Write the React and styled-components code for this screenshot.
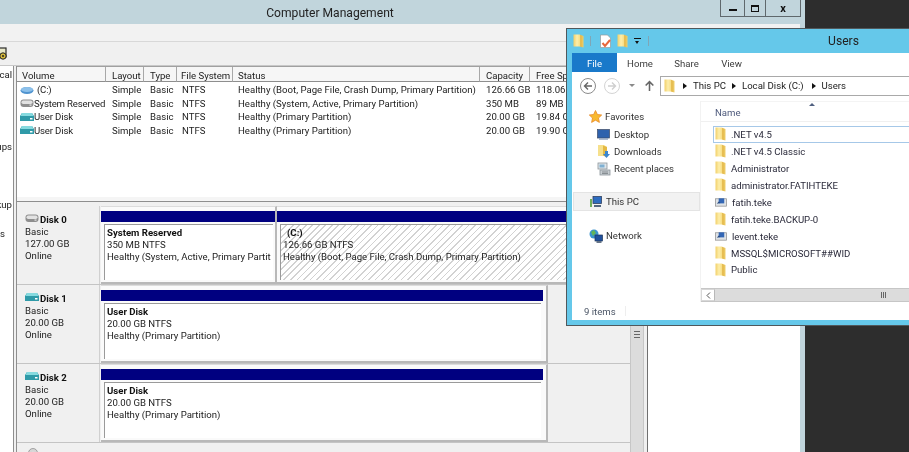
import React from "react";
import styled, { createGlobalStyle } from "styled-components";

const Global = createGlobalStyle`
  html, body { margin: 0; padding: 0; background: #2d2d2d; }
  * { box-sizing: border-box; }
  svg { flex: none; }
`;

const Desktop = styled.div`
  position: relative;
  width: 909px;
  height: 452px;
  overflow: hidden;
  background: #2d2d2d;
  font-family: Roboto, "Open Sans", sans-serif;
  font-size: 9.6px;
  color: #222;
  filter: blur(0.3px);
`;

/* ---------- Computer Management window ---------- */
const MgmtWindow = styled.div`
  width: 805px;
  height: 452px;
  display: flex;
  flex-direction: column;
  background: #c1d5dc;
  padding-right: 5px;
`;
const TitleBar = styled.div`
  height: 24px;
  flex: none;
  margin-right: -5px;
  padding: 1px 145px 0 0;
  display: flex;
  align-items: center;
  justify-content: center;
  background: #c1d5dc;
  font-size: 12.1px;
  color: #222;
`;
const WindowControls = styled.div`
  position: absolute;
  left: 720px;
  top: 0;
  width: 81px;
  height: 17px;
  display: grid;
  grid-template-columns: 23px 21px 1fr;
  background: #c1d5dc;
  border: 1px solid #5f686c;
  border-top: none;
`;
const ControlCell = styled.div`
  display: flex;
  align-items: center;
  justify-content: center;
  border-left: ${(p) => (p.$first ? "none" : "1px solid #5f686c")};
  font-weight: 700;
  font-size: 11px;
  color: #111;
`;
const MinGlyph = styled.span`
  width: 8px;
  height: 2px;
  margin-top: 4px;
  background: #111;
`;
const MaxGlyph = styled.span`
  width: 8px;
  height: 7px;
  border: 1px solid #111;
  border-top-width: 2px;
`;
const MenuBar = styled.div`
  height: 18px;
  flex: none;
  background: #f2f2f2;
  border-bottom: 1px solid #d8d8d8;
`;
const ToolBar = styled.div`
  height: 24px;
  flex: none;
  display: flex;
  align-items: center;
  background: #f0f0f0;
  border-bottom: 1px solid #c8c8c8;
`;
const Body = styled.div`
  flex: 1;
  min-height: 0;
  display: flex;
  background: #f0f0f0;
`;
const Tree = styled.div`
  width: 14px;
  flex: none;
  background: #fff;
  border-right: 1px solid #8e8e8e;
  overflow: hidden;
  padding-top: 3px;
  display: flex;
  flex-direction: column;
`;
const TreeLine = styled.div`
  display: flex;
  justify-content: ${(p) => (p.$left ? "flex-start" : "flex-end")};
  margin-top: ${(p) => p.$gap}px;
  line-height: 12px;
  white-space: nowrap;
  padding-right: 1px;
`;
const Center = styled.div`
  width: 614px;
  flex: none;
  margin-left: 2px;
  display: flex;
  flex-direction: column;
  border-left: 1px solid #8e8e8e;
`;
const VolumeList = styled.div`
  height: 135px;
  flex: none;
  background: #fff;
  overflow: hidden;
  border-top: 1px solid #a0a0a0;
  border-bottom: 4px solid #f5f5f5;
`;
const ListGrid = styled.div`
  display: grid;
  grid-template-columns: 89px 38px 33px 56px 247px 50px 80px;
`;
const HeadCell = styled.div`
  height: 15px;
  padding-left: ${(p) => p.$pad ?? 5}px;
  line-height: 17px;
  background: #f6f6f6;
  border-right: 1px solid #a8a8a8;
  border-bottom: 1px solid #8e8e8e;
  white-space: nowrap;
  overflow: hidden;
`;
const Cell = styled.div`
  height: 13.5px;
  padding-left: ${(p) => p.$pad ?? 6}px;
  line-height: 13.5px;
  white-space: nowrap;
  overflow: hidden;
  display: flex;
  align-items: center;
  gap: ${(p) => p.$gap ?? 0}px;
`;
const VolumeCell = styled(Cell)`
  padding-left: 3px;
  letter-spacing: -0.16px;
`;
const ListSpacer = styled.div`
  grid-column: 1 / -1;
  height: 1px;
`;
const Splitter = styled.div`
  height: 5px;
  flex: none;
  background: #f0f0f0;
  border-top: 1px solid #8e8e8e;
`;
const DiskPane = styled.div`
  flex: 1;
  min-height: 0;
  background: #f0f0f0;
  display: flex;
  flex-direction: column;
  overflow: hidden;
`;
const DiskRow = styled.div`
  height: 79px;
  flex: none;
  display: flex;
  border-bottom: 1px solid #c4c4c4;
`;
const DiskInfo = styled.div`
  width: 83px;
  flex: none;
  padding: 7px 0 0 8px;
  border-right: 1px solid #d0d0d0;
  line-height: 12px;
`;
const DiskName = styled.div`
  display: flex;
  align-items: center;
  gap: 1px;
  font-weight: 700;
  color: #111;
  height: 13px;
  & svg {
    margin-top: -4px;
  }
`;
const DiskMeta = styled.div`
  line-height: 12px;
`;
const Volumes = styled.div`
  flex: 1;
  display: flex;
  padding-left: 1px;
  min-width: 0;
`;
const Partition = styled.div`
  width: ${(p) => p.$w}px;
  flex: none;
  padding: 4px ${(p) => p.$pr}px 0 0;
  border-right: 2px solid #b8b8b8;
  border-bottom: 2px solid #b8b8b8;
  border-top: 1px solid #dcdcdc;
  display: flex;
  flex-direction: column;
  background: #fafafa;
`;
const NavyBar = styled.div`
  height: 11px;
  flex: none;
  background: #000080;
`;
const PartBox = styled.div`
  flex: 1;
  margin: 2px ${(p) => p.$mr}px 2px ${(p) => p.$ml}px;
  padding: 2px 0 0 2px;
  border-left: 1px solid #9a9a9a;
  border-top: 1px solid #9a9a9a;
  line-height: 12px;
  white-space: nowrap;
  overflow: hidden;
  background: ${(p) =>
    p.$hatched
      ? "repeating-linear-gradient(135deg, #fff 0 3.5px, #d2d2d2 3.5px 4.6px)"
      : "#fff"};
`;
const PartTitle = styled.div`
  font-weight: 700;
  color: #111;
  padding-left: ${(p) => p.$pad ?? 0}px;
`;
const LastRow = styled.div`
  flex: 1;
  padding: 5px 0 0 11px;
`;
const VScroll = styled.div`
  width: 14px;
  flex: none;
  background: #dcdcdc;
  border-left: 1px solid #c6c6c6;
  border-right: 1px solid #c6c6c6;
  display: flex;
  align-items: flex-start;
  justify-content: center;
  padding-top: 265px;
`;
const Grip = styled.div`
  width: 6px;
  height: 7px;
  border-top: 1px solid #666;
  border-bottom: 1px solid #666;
  position: relative;
  &::after {
    content: "";
    position: absolute;
    left: 0;
    right: 0;
    top: 2px;
    height: 1px;
    background: #666;
  }
`;
const ActionGap = styled.div`
  width: 3px;
  flex: none;
  background: #f0f0f0;
`;
const ActionPane = styled.div`
  flex: 1;
  background: #fff;
  border-left: 1px solid #707070;
`;

/* ---------- Users explorer window ---------- */
const ExplorerWindow = styled.div`
  position: absolute;
  left: 566px;
  top: 28px;
  width: 554px;
  height: 298px;
  display: flex;
  flex-direction: column;
  background: #65c8ea;
  border: 1px solid #50585c;
  border-right: none;
  padding: 0 5px 5px 5px;
`;
const ExplorerTitle = styled.div`
  height: 24px;
  flex: none;
  display: grid;
  grid-template-columns: 1fr auto 1fr;
  align-items: center;
`;
const QuickAccess = styled.div`
  display: flex;
  align-items: center;
  padding-left: 1px;
`;
const QuickSep = styled.span`
  width: 1px;
  height: 10px;
  background: #7fa6b6;
  margin: 0 ${(p) => p.$r}px 0 ${(p) => p.$l}px;
`;
const QuickGap = styled.span`
  width: ${(p) => p.$w}px;
`;
const CaretMenu = styled.span`
  width: 7px;
  height: 6px;
  margin-left: 6px;
  border-top: 1px solid #111;
  position: relative;
  &::after {
    content: "";
    position: absolute;
    left: 1px;
    top: 2px;
    border-left: 2.5px solid transparent;
    border-right: 2.5px solid transparent;
    border-top: 3px solid #111;
  }
`;
const ExplorerName = styled.div`
  font-size: 12.1px;
  color: #222;
`;
const Tabs = styled.div`
  height: 19px;
  flex: none;
  display: flex;
  background: #fff;
`;
const Tab = styled.div`
  width: ${(p) => p.$w}px;
  display: flex;
  align-items: center;
  justify-content: center;
  padding-top: 1px;
  background: ${(p) => (p.$active ? "#1979ca" : "#fff")};
  color: ${(p) => (p.$active ? "#fff" : "#3c3c3c")};
`;
const Client = styled.div`
  flex: 1;
  min-height: 0;
  background: #fff;
  display: flex;
  flex-direction: column;
`;
const AddressRow = styled.div`
  height: 29px;
  flex: none;
  display: flex;
  align-items: center;
  padding: 0 0 2px 8px;
`;
const RoundButton = styled.span`
  width: 16px;
  height: 16px;
  flex: none;
  margin-right: ${(p) => p.$mr}px;
  border-radius: 50%;
  border: 1px solid ${(p) => (p.$off ? "#d4d4d4" : "#8b8b8b")};
  display: flex;
  align-items: center;
  justify-content: center;
`;
const SmallDown = styled.span`
  border-left: 3px solid transparent;
  border-right: 3px solid transparent;
  border-top: 3px solid #8a8a8a;
  margin-right: 9px;
`;
const AddressBar = styled.div`
  width: 400px;
  height: 20px;
  flex: none;
  margin-left: 5px;
  display: flex;
  align-items: center;
  border: 1px solid #a9a9a9;
  padding-left: 3px;
  color: #222;
`;
const Crumb = styled.span`
  margin-right: ${(p) => p.$mr}px;
`;
const Arrow = styled.span`
  border-top: 3px solid transparent;
  border-bottom: 3px solid transparent;
  border-left: 4px solid #111;
  margin: 0 6px 0 ${(p) => p.$ml ?? 0}px;
`;
const Panes = styled.div`
  flex: 1;
  min-height: 0;
  display: flex;
`;
const NavPane = styled.div`
  width: 129px;
  flex: none;
  display: flex;
  flex-direction: column;
  padding: 7px 1px 0 2px;
  border-right: 1px solid #f2f2f2;
`;
const NavItem = styled.div`
  height: 17px;
  flex: none;
  display: flex;
  align-items: center;
  gap: ${(p) => p.$gap ?? 4}px;
  padding-left: ${(p) => p.$pad}px;
  margin-top: ${(p) => p.$mt ?? 0}px;
  white-space: nowrap;
  color: #333;
  background: ${(p) => (p.$selected ? "#f2f2f2" : "transparent")};
  outline: ${(p) => (p.$selected ? "1px solid #e4e4e4" : "none")};
`;
const FilePane = styled.div`
  flex: 1;
  min-width: 0;
  display: flex;
  flex-direction: column;
`;
const SortBar = styled.div`
  height: 21px;
  flex: none;
  display: flex;
  align-items: flex-end;
  padding: 0 0 3px 14px;
  color: #4e5a7c;
  border-top: 1px solid #f4f4f4;
  border-bottom: 1px solid #f0f0f0;
  position: relative;
`;
const SortMark = styled.span`
  position: absolute;
  left: 108px;
  top: 1px;
  border-left: 3px solid transparent;
  border-right: 3px solid transparent;
  border-bottom: 3px solid #506080;
`;
const Files = styled.div`
  flex: 1;
  min-height: 0;
  padding: 4px 0 0 12px;
`;
const FileRow = styled.div`
  height: 16.95px;
  display: flex;
  align-items: center;
  gap: 5px;
  padding-left: 2px;
  white-space: nowrap;
  color: #2a2a3a;
  outline: ${(p) => (p.$focus ? "1px solid #a6c8e8" : "none")};
  outline-offset: -1px;
`;
const HScroll = styled.div`
  height: 14px;
  flex: none;
  display: flex;
  background: #dcdcdc;
  border-top: 1px solid #c6c6c6;
  border-bottom: 1px solid #c6c6c6;
`;
const ScrollLeft = styled.div`
  width: 14px;
  background: #fff;
  border: 1px solid #d8d8d8;
  border-right: 1px solid #b8b8b8;
  display: flex;
  align-items: center;
  justify-content: center;
`;
const ScrollThumb = styled.div`
  width: 336px;
  display: flex;
  align-items: center;
  justify-content: center;
  gap: 1px;
`;
const ThumbLine = styled.span`
  width: 1px;
  height: 6px;
  background: #666;
`;
const StatusBar = styled.div`
  height: 18px;
  flex: none;
  display: flex;
  align-items: center;
  padding-left: 12px;
  color: #4c5666;
`;
const StatusSep = styled.span`
  width: 1px;
  height: 10px;
  margin-left: 9px;
  background: #eee;
`;

/* ---------- drawn icons ---------- */
const Folder = () => (
  <svg width="11" height="14" viewBox="0 0 11 14">
    <defs>
      <linearGradient id="fold" x1="0" x2="1" y1="0" y2="0">
        <stop offset="0" stopColor="#f2d06a" />
        <stop offset=".35" stopColor="#fdeeaa" />
        <stop offset=".6" stopColor="#f8e08a" />
        <stop offset=".72" stopColor="#e3b748" />
        <stop offset="1" stopColor="#f0d06c" />
      </linearGradient>
    </defs>
    <path d="M.5.5h6l4 1.500v11.500l-4-1H.5z" fill="url(#fold)" />
  </svg>
);
const NoteCheck = () => (
  <svg width="13" height="15" viewBox="0 0 13 15">
    <path d="M1.500 1h7l3 3v9.500h-10z" fill="#fff" stroke="#9a9a9a" strokeWidth=".7" />
    <path d="M3.500 9l2.500 3 5-6" fill="none" stroke="#e8663a" strokeWidth="2" />
  </svg>
);
const BlueDisk = () => (
  <svg width="14" height="10" viewBox="0 0 14 10">
    <ellipse cx="7" cy="5.500" rx="6.500" ry="3.500" fill="#4f93cf" />
    <ellipse cx="7" cy="4.500" rx="6" ry="2.500" fill="#8cc0ea" />
  </svg>
);
const GreyDisk = () => (
  <svg width="14" height="10" viewBox="0 0 14 10">
    <rect x=".5" y="1.500" width="13" height="7.500" rx="3" fill="#8e8e8e" />
    <rect x="1.500" y="2.500" width="11" height="3.500" rx="1.700" fill="#e2e2e2" />
    <rect x="9.500" y="6.500" width="2" height="1.200" fill="#e6e6e6" />
  </svg>
);
const TealDisk = () => (
  <svg width="14" height="10" viewBox="0 0 14 10">
    <path d="M2 1h10l2 3v5H0V4z" fill="#2f9aa8" />
    <path d="M2 1h10l1.500 3H.5z" fill="#86dadf" />
    <rect x="10" y="6" width="2.500" height="1.500" fill="#fff" />
  </svg>
);
const Star = () => (
  <svg width="13" height="13" viewBox="0 0 13 13">
    <path d="M6.500.5l1.900 4 4.300.5-3.200 3 .9 4.400-3.900-2.200-3.900 2.200.9-4.400-3.200-3 4.300-.5z" fill="#f8b92f" stroke="#e8892a" strokeWidth=".8" />
  </svg>
);
const DesktopIcon = () => (
  <svg width="13" height="11" viewBox="0 0 13 11">
    <rect x=".5" y=".5" width="12" height="8.500" fill="#2f62ad" stroke="#3d4a66" strokeWidth=".7" />
    <rect x="2" y="9.300" width="9" height="1.400" fill="#8da0bb" />
  </svg>
);
const DownloadsIcon = () => (
  <svg width="13" height="15" viewBox="0 0 13 15">
    <path d="M1 1h6l3 2v10l-3-1H1z" fill="#f6e08c" />
    <path d="M6 1.500l4 1.500v10l-4-1.500z" fill="#e4b944" />
    <path d="M8 7h3v3h2l-3.500 4L6 10h2z" fill="#3b86cf" />
  </svg>
);
const RecentIcon = () => (
  <svg width="14" height="14" viewBox="0 0 14 14">
    <rect x="1" y="1" width="9" height="6" fill="#dfe6ea" stroke="#8c959b" strokeWidth=".8" />
    <rect x="2.500" y="2.500" width="5" height="3" fill="#7fb0d2" />
    <rect x="3" y="8" width="10" height="5" fill="#c7cdd1" stroke="#8c959b" strokeWidth=".8" />
    <path d="M5 10h6M5 11.500h6" stroke="#6d7479" strokeWidth=".7" />
  </svg>
);
const PcIcon = () => (
  <svg width="13" height="12" viewBox="0 0 13 12">
    <rect x="4" y=".5" width="8.500" height="7" fill="#2d6cc0" stroke="#30415f" strokeWidth=".8" />
    <rect x="1" y="3" width="2" height="8" fill="#6fae5c" />
    <rect x="5" y="9" width="7" height="2" fill="#52657e" />
  </svg>
);
const NetworkIcon = () => (
  <svg width="14" height="14" viewBox="0 0 14 14">
    <circle cx="5" cy="5" r="4.500" fill="#3b93cf" />
    <path d="M2 3l3-2 2 3-3 3z" fill="#62b558" />
    <rect x="6" y="6" width="7.500" height="6" fill="#20509e" stroke="#1f3558" strokeWidth=".7" />
    <rect x="7.500" y="12.300" width="5" height="1.500" fill="#44556c" />
  </svg>
);
const UserFolder = () => (
  <svg width="12" height="10" viewBox="0 0 13 10">
    <rect x=".5" y="1.500" width="12" height="8" fill="#dfe3e6" stroke="#8f8f8f" strokeWidth=".8" />
    <rect x="4" y="1" width="6" height="5.500" fill="#3467b5" />
    <path d="M2 7l2-2.500L6 6z" fill="#27497f" />
  </svg>
);
const ToolGear = () => (
  <svg width="8" height="14" viewBox="0 0 8 14">
    <rect x="-4" y="1" width="10" height="9" fill="#e8e8c8" stroke="#2b2b2b" strokeWidth="1.200" />
    <circle cx="3" cy="9" r="3.200" fill="#d4b83a" stroke="#222" strokeWidth="1" />
    <circle cx="3" cy="9" r="1" fill="#222" />
  </svg>
);
const CdIcon = () => (
  <svg width="10" height="10" viewBox="0 0 10 10">
    <circle cx="5" cy="5" r="4.500" fill="#d6d6d6" stroke="#909090" strokeWidth=".8" />
    <circle cx="5" cy="5" r="1.300" fill="#f6f6f6" />
  </svg>
);
const ArrowGlyph = ({ dir = "left", color = "#666", size = 10 }) => (
  <svg width={size} height={size} viewBox="0 0 10 10" fill="none" stroke={color} strokeWidth="1.400">
    {dir === "left" && <path d="M9 5H1.500M5 1.500L1.500 5 5 8.500" />}
    {dir === "right" && <path d="M1 5h7.500M5 1.500L8.500 5 5 8.500" />}
    {dir === "up" && <path d="M5 10V1.500M1.500 5L5 1.500 8.500 5" />}
  </svg>
);

/* ---------- data ---------- */
const volumes = [
  { icon: <BlueDisk />, name: "(C:)", gap: 3, cap: "126.66 GB", free: "118.06 GB", status: "Healthy (Boot, Page File, Crash Dump, Primary Partition)" },
  { icon: <GreyDisk />, name: "System Reserved", cap: "350 MB", free: "89 MB", status: "Healthy (System, Active, Primary Partition)" },
  { icon: <TealDisk />, name: "User Disk", cap: "20.00 GB", free: "19.84 GB", status: "Healthy (Primary Partition)" },
  { icon: <TealDisk />, name: "User Disk", cap: "20.00 GB", free: "19.90 GB", status: "Healthy (Primary Partition)" },
];
const heads = [
  ["Layout", 6],
  ["Type", 6],
  ["File System", 4],
  ["Status", 5],
  ["Capacity", 6],
  ["Free Space", 6],
];
const files = [
  { name: ".NET v4.5", focus: true },
  { name: ".NET v4.5 Classic" },
  { name: "Administrator" },
  { name: "administrator.FATIHTEKE" },
  { name: "fatih.teke", user: true },
  { name: "fatih.teke.BACKUP-0" },
  { name: "levent.teke", user: true },
  { name: "MSSQL$MICROSOFT##WID" },
  { name: "Public" },
];

const Disk = ({ icon, name, size, children }) => (
  <DiskRow>
    <DiskInfo>
      <DiskName>{icon}{name}</DiskName>
      <DiskMeta>Basic</DiskMeta>
      <DiskMeta>{size}</DiskMeta>
      <DiskMeta>Online</DiskMeta>
    </DiskInfo>
    <Volumes>{children}</Volumes>
  </DiskRow>
);

export default function App() {
  return (
    <Desktop>
      <Global />
      <MgmtWindow>
        <TitleBar>Computer Management</TitleBar>
        <MenuBar />
        <ToolBar><ToolGear /></ToolBar>
        <Body>
          <Tree>
            <TreeLine $gap={0}>Local</TreeLine>
            <TreeLine $gap={60}>Groups</TreeLine>
            <TreeLine $gap={46}>Backup</TreeLine>
            <TreeLine $gap={17} $left>s</TreeLine>
          </Tree>
          <Center>
            <VolumeList>
              <ListGrid>
                <HeadCell>Volume</HeadCell>
                {heads.map(([h, pad]) => <HeadCell key={h} $pad={pad}>{h}</HeadCell>)}
                <ListSpacer />
                {volumes.map((v, i) => (
                  <React.Fragment key={i}>
                    <VolumeCell $gap={v.gap ?? 0}>{v.icon}{v.name}</VolumeCell>
                    <Cell>Simple</Cell>
                    <Cell>Basic</Cell>
                    <Cell $pad={5}>NTFS</Cell>
                    <Cell $pad={5}>{v.status}</Cell>
                    <Cell>{v.cap}</Cell>
                    <Cell>{v.free}</Cell>
                  </React.Fragment>
                ))}
              </ListGrid>
            </VolumeList>
            <Splitter />
            <DiskPane>
              <Disk icon={<GreyDisk />} name="Disk 0" size="127.00 GB">
                <Partition $w={176} $pr={0}>
                  <NavyBar />
                  <PartBox $ml={3} $mr={2}>
                    <PartTitle>System Reserved</PartTitle>
                    350 MB NTFS<br />
                    Healthy (System, Active, Primary Partit
                  </PartBox>
                </Partition>
                <Partition $w={360} $pr={0}>
                  <NavyBar />
                  <PartBox $ml={3} $mr={0} $hatched>
                    <PartTitle $pad={4}>(C:)</PartTitle>
                    126.66 GB NTFS<br />
                    Healthy (Boot, Page File, Crash Dump, Primary Partition)
                  </PartBox>
                </Partition>
              </Disk>
              <Disk icon={<TealDisk />} name="Disk 1" size="20.00 GB">
                <Partition $w={447} $pr={3}>
                  <NavyBar />
                  <PartBox $ml={3} $mr={2}>
                    <PartTitle>User Disk</PartTitle>
                    20.00 GB NTFS<br />
                    Healthy (Primary Partition)
                  </PartBox>
                </Partition>
              </Disk>
              <Disk icon={<TealDisk />} name="Disk 2" size="20.00 GB">
                <Partition $w={447} $pr={3}>
                  <NavyBar />
                  <PartBox $ml={3} $mr={2}>
                    <PartTitle>User Disk</PartTitle>
                    20.00 GB NTFS<br />
                    Healthy (Primary Partition)
                  </PartBox>
                </Partition>
              </Disk>
              <LastRow><CdIcon /></LastRow>
            </DiskPane>
          </Center>
          <VScroll><Grip /></VScroll>
          <ActionGap />
          <ActionPane />
        </Body>
      </MgmtWindow>
      <WindowControls>
        <ControlCell $first><MinGlyph /></ControlCell>
        <ControlCell><MaxGlyph /></ControlCell>
        <ControlCell>x</ControlCell>
      </WindowControls>

      <ExplorerWindow>
        <ExplorerTitle>
          <QuickAccess>
            <Folder />
            <QuickSep $l={6} $r={8} />
            <NoteCheck />
            <QuickGap $w={5} />
            <Folder />
            <CaretMenu />
            <QuickSep $l={7} $r={0} />
          </QuickAccess>
          <ExplorerName>Users</ExplorerName>
          <span />
        </ExplorerTitle>
        <Tabs>
          <Tab $w={45} $active>File</Tab>
          <Tab $w={46}>Home</Tab>
          <Tab $w={47}>Share</Tab>
          <Tab $w={43}>View</Tab>
        </Tabs>
        <Client>
          <AddressRow>
            <RoundButton $mr={8}><ArrowGlyph /></RoundButton>
            <RoundButton $mr={9} $off><ArrowGlyph dir="right" color="#cfcfcf" /></RoundButton>
            <SmallDown />
            <ArrowGlyph dir="up" size={11} />
            <AddressBar>
              <Folder />
              <Arrow $ml={8} />
              <Crumb $mr={6}>This PC</Crumb>
              <Arrow />
              <Crumb $mr={8}>Local Disk (C:)</Crumb>
              <Arrow />
              <Crumb $mr={0}>Users</Crumb>
            </AddressBar>
          </AddressRow>
          <Panes>
            <NavPane>
              <NavItem $pad={15} $gap={3}><Star />Favorites</NavItem>
              <NavItem $pad={23} $gap={4} $mt={1}><DesktopIcon />Desktop</NavItem>
              <NavItem $pad={23} $gap={4}><DownloadsIcon />Downloads</NavItem>
              <NavItem $pad={23} $gap={3}><RecentIcon />Recent places</NavItem>
              <NavItem $pad={15} $gap={4} $mt={16} $selected><PcIcon />This PC</NavItem>
              <NavItem $pad={15} $gap={3} $mt={17}><NetworkIcon />Network</NavItem>
            </NavPane>
            <FilePane>
              <SortBar>
                <SortMark />
                Name
              </SortBar>
              <Files>
                {files.map((f) => (
                  <FileRow key={f.name} $focus={f.focus}>
                    {f.user ? <UserFolder /> : <Folder />}
                    {f.name}
                  </FileRow>
                ))}
              </Files>
              <HScroll>
                <ScrollLeft>
                  <svg width="5" height="7" viewBox="0 0 5 7" fill="none" stroke="#555"><path d="M4 .5L1 3.500 4 6.500" /></svg>
                </ScrollLeft>
                <ScrollThumb>
                  <ThumbLine /><ThumbLine /><ThumbLine />
                </ScrollThumb>
              </HScroll>
            </FilePane>
          </Panes>
          <StatusBar>9 items<StatusSep /></StatusBar>
        </Client>
      </ExplorerWindow>
    </Desktop>
  );
}
